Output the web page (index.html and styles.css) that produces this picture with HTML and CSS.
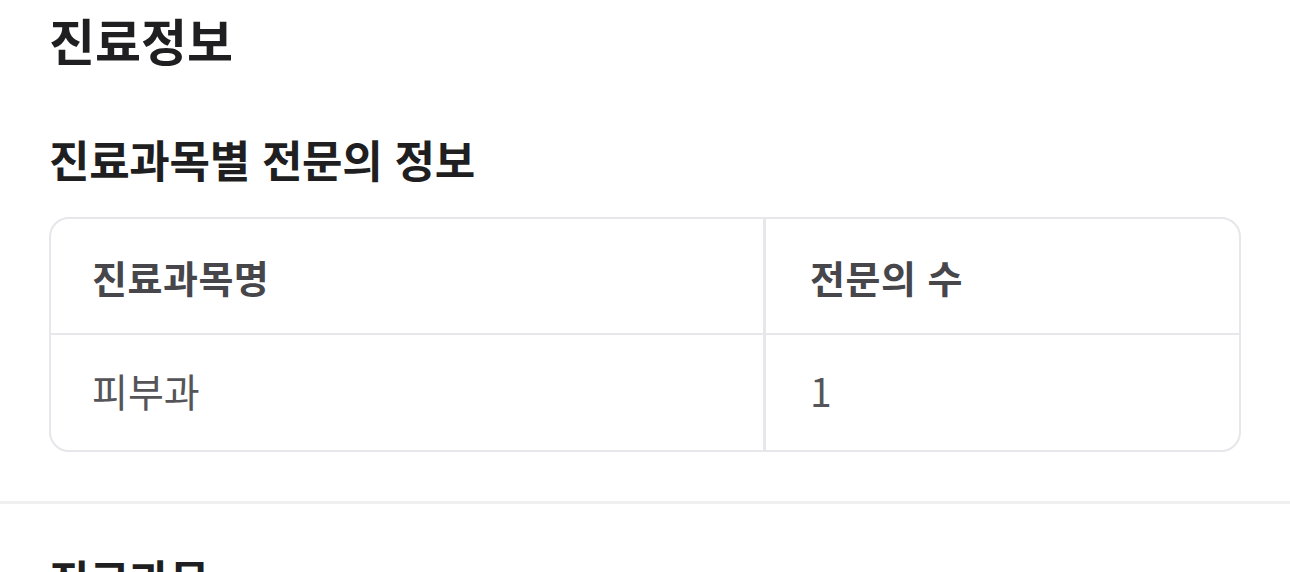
FILE: index.html
```html
<!DOCTYPE html>
<html lang="ko">
<head>
<meta charset="utf-8">
<link rel="stylesheet" href="styles.css">
</head>
<body>
<section class="section">
  <h1 class="page-title">진료정보</h1>
  <h2 class="sub-title">진료과목별 전문의 정보</h2>
  <div class="table-wrap">
    <table class="info-table">
      <colgroup>
        <col class="col-name-w">
        <col>
      </colgroup>
      <thead>
        <tr>
          <th class="col-name">진료과목명</th>
          <th class="col-count">전문의 수</th>
        </tr>
      </thead>
      <tbody>
        <tr>
          <td class="col-name">피부과</td>
          <td class="col-count">1</td>
        </tr>
      </tbody>
    </table>
  </div>
</section>
<hr class="divider">
<section class="section">
  <h2 class="sub-title next">진료과목</h2>
</section>
</body>
</html>
```
FILE: styles.css
```css
html, body {
  margin: 0;
  padding: 0;
  background: #ffffff;
}
body {
  font-family: "Noto Sans CJK KR", "Noto Sans", sans-serif;
  color: #1f1f22;
  overflow: hidden;
}
.section {
  padding: 0 49px;
}
.page-title {
  margin: 0;
  padding-top: 7px;
  font-size: 50px;
  line-height: 64px;
  font-weight: 700;
  letter-spacing: 0;
  color: #1f1f22;
}
.sub-title {
  margin: 0;
  margin-top: 60px;
  font-size: 44px;
  line-height: 56px;
  font-weight: 700;
  letter-spacing: -0.3px;
  color: #1f1f22;
}
.sub-title.next {
  margin-top: 47px;
}
.table-wrap {
  margin-top: 30px;
  border: 2px solid #e6e6eb;
  border-radius: 20px;
  overflow: hidden;
}
.info-table {
  width: 100%;
  border-collapse: separate;
  border-spacing: 0;
  table-layout: fixed;
}
.info-table .col-name-w {
  width: 715px;
}
.info-table th,
.info-table td {
  box-sizing: border-box;
  padding: 0 0 0 41px;
  text-align: left;
  vertical-align: middle;
}
.info-table th {
  height: 116px;
  font-size: 38px;
  font-weight: 700;
  letter-spacing: 0.5px;
  color: #46464b;
  border-bottom: 2px solid #e6e6eb;
}
.info-table td {
  height: 115px;
  padding-bottom: 5px;
  font-size: 39px;
  font-weight: 400;
  color: #555559;
}
.info-table .col-name {
  border-right: 3px solid #e6e6eb;
}
.info-table .col-count {
  padding-left: 44px;
}
.divider {
  margin: 49px 0 0;
  border: 0;
  height: 3px;
  background: #f0f0f0;
}
```
